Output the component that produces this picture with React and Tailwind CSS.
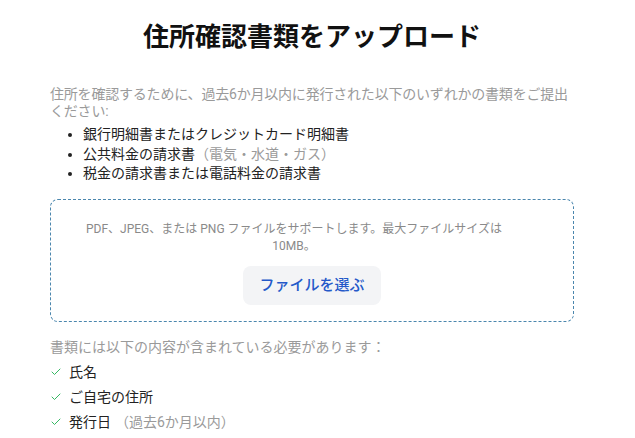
import React from 'react';

const REQUIRED = [
  { label: '氏名' },
  { label: 'ご自宅の住所' },
  { label: '発行日', note: '（過去6か月以内）' }
];

function CheckIcon() {
  return (
    <svg width="12" height="12" viewBox="0 0 24 24" fill="none" stroke="#34b862" strokeWidth="2" strokeLinecap="round" strokeLinejoin="round">
      <path d="M20 6 9 17l-5-5" />
    </svg>
  );
}

export default function App() {
  return (
    <div className="min-h-screen bg-white pl-[50px] pr-[61px] font-['Roboto','Noto_Sans_CJK_JP',sans-serif]">
      {/* タイトル */}
      <h1 className="pt-[20px] text-center text-[26px] leading-[34px] font-bold text-[#111]">
        住所確認書類をアップロード
      </h1>

      {/* 説明 */}
      <p className="-mr-[4px] mt-[32px] text-sm leading-[17px] tracking-[-0.2px] text-[#9a9a9a]">
        住所を確認するために、過去6か月以内に発行された以下のいずれかの書類をご提出ください:
      </p>
      <ul className="mt-[5px] list-disc pl-[33px] text-sm leading-[19.5px] text-[#222]">
        <li>銀行明細書またはクレジットカード明細書</li>
        <li>
          公共料金の請求書<span className="text-[#9a9a9a]">（電気・水道・ガス）</span>
        </li>
        <li>税金の請求書または電話料金の請求書</li>
      </ul>

      {/* アップロードエリア */}
      <div className="mt-[15px] flex flex-col items-center rounded-lg border border-dashed border-[#4a86ad] pt-[21px] pb-4">
        <p className="w-full pl-[14px] pr-[50px] text-center text-xs leading-[17px] text-[#8a8a8a]">
          PDF、JPEG、または PNG ファイルをサポートします。最大ファイルサイズは 10MB。
        </p>
        <button className="mt-[11px] h-[39px] rounded-lg bg-[#f3f4f6] px-4 text-[15px] font-medium text-[#2459c9]">
          ファイルを選ぶ
        </button>
      </div>

      {/* 必要な内容 */}
      <p className="mt-[15px] text-sm leading-[20px] text-[#9a9a9a]">
        書類には以下の内容が含まれている必要があります：
      </p>
      <div className="mt-[3px]">
        {REQUIRED.map((item) => (
          <div key={item.label} className="flex h-[25px] items-center gap-[7px] text-sm text-[#222]">
            <CheckIcon />
            <span>
              {item.label}
              {item.note && <span className="ml-1 text-[#9a9a9a]">{item.note}</span>}
            </span>
          </div>
        ))}
      </div>
    </div>
  );
}
